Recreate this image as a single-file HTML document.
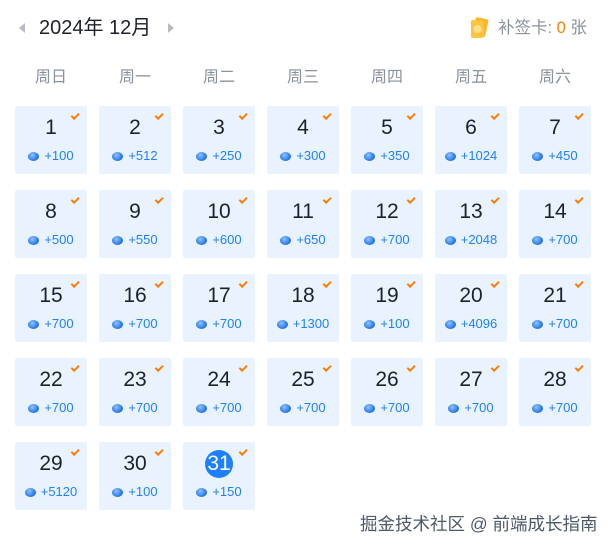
<!DOCTYPE html>
<html><head><meta charset="utf-8"><style>
body{margin:0;width:614px;height:551px;background:#fff;font-family:"Liberation Sans","Noto Sans CJK SC",sans-serif;position:relative;overflow:hidden}
.hd{position:absolute;top:15px;left:39px;font-size:20px;color:#1d2129;line-height:26px}
.arl{position:absolute;left:19px;top:23px;width:0;height:0;border-top:5px solid transparent;border-bottom:5px solid transparent;border-right:6px solid #b8bcc2}
.arr{position:absolute;left:168px;top:23px;width:0;height:0;border-top:5px solid transparent;border-bottom:5px solid transparent;border-left:6px solid #b8bcc2}
.card{position:absolute;left:498px;top:17px;font-size:16.5px;color:#8a919f;line-height:22px;white-space:nowrap}
.card b{font-weight:normal;color:#ff7d00}
.wk{position:absolute;top:68px;width:72px;text-align:center;font-size:16px;color:#8a919f;line-height:20px}
.c{position:absolute;width:72px;height:68px;background:#e8f3ff;border-radius:2px}
.c .n{position:absolute;top:9px;left:0;width:72px;text-align:center;font-size:21px;color:#1d2129;line-height:26px}
.c .p{position:absolute;top:41px;left:0;width:72px;text-align:center;font-size:13px;color:#1e80ff;line-height:17px}
.c .p i{display:inline-block;width:11px;height:9px;border-radius:50%;background:radial-gradient(circle at 40% 35%,#8cc4ff,#1e6fe6 70%);vertical-align:-1px;margin-right:5px}
.c .k{position:absolute;right:8px;top:7px;width:6px;height:2.5px;border-left:2px solid #ff7d00;border-bottom:2px solid #ff7d00;transform:rotate(-45deg)}
.c .t{display:inline-block;width:28px;height:28px;border-radius:50%;background:#1e80ff;color:#fff;margin-top:-1px;line-height:28px}
.wm{position:absolute;left:360px;top:513px;font-size:17.5px;color:#4e5969;line-height:22px;white-space:nowrap}
</style></head><body>
<div class="arl"></div><div class="hd">2024年 12月</div><div class="arr"></div>
<svg style="position:absolute;left:469px;top:17px" width="20" height="22" viewBox="0 0 20 22"><rect x="5" y="1" width="13" height="18" rx="2" fill="#ffb52a" transform="rotate(12 11 10)"/><rect x="2" y="3" width="13" height="18" rx="2" fill="#ffc43d"/><circle cx="8.5" cy="12" r="4" fill="#ffe08a"/></svg>
<div class="card">补签卡: <b>0</b> 张</div>
<div class="wk" style="left:15px">周日</div><div class="wk" style="left:99px">周一</div><div class="wk" style="left:183px">周二</div><div class="wk" style="left:267px">周三</div><div class="wk" style="left:351px">周四</div><div class="wk" style="left:435px">周五</div><div class="wk" style="left:519px">周六</div>

<div class="c" style="left:15px;top:106px"><div class="n">1</div><div class="p"><i></i>+100</div><div class="k"></div></div>
<div class="c" style="left:99px;top:106px"><div class="n">2</div><div class="p"><i></i>+512</div><div class="k"></div></div>
<div class="c" style="left:183px;top:106px"><div class="n">3</div><div class="p"><i></i>+250</div><div class="k"></div></div>
<div class="c" style="left:267px;top:106px"><div class="n">4</div><div class="p"><i></i>+300</div><div class="k"></div></div>
<div class="c" style="left:351px;top:106px"><div class="n">5</div><div class="p"><i></i>+350</div><div class="k"></div></div>
<div class="c" style="left:435px;top:106px"><div class="n">6</div><div class="p"><i></i>+1024</div><div class="k"></div></div>
<div class="c" style="left:519px;top:106px"><div class="n">7</div><div class="p"><i></i>+450</div><div class="k"></div></div>

<div class="c" style="left:15px;top:190px"><div class="n">8</div><div class="p"><i></i>+500</div><div class="k"></div></div>
<div class="c" style="left:99px;top:190px"><div class="n">9</div><div class="p"><i></i>+550</div><div class="k"></div></div>
<div class="c" style="left:183px;top:190px"><div class="n">10</div><div class="p"><i></i>+600</div><div class="k"></div></div>
<div class="c" style="left:267px;top:190px"><div class="n">11</div><div class="p"><i></i>+650</div><div class="k"></div></div>
<div class="c" style="left:351px;top:190px"><div class="n">12</div><div class="p"><i></i>+700</div><div class="k"></div></div>
<div class="c" style="left:435px;top:190px"><div class="n">13</div><div class="p"><i></i>+2048</div><div class="k"></div></div>
<div class="c" style="left:519px;top:190px"><div class="n">14</div><div class="p"><i></i>+700</div><div class="k"></div></div>

<div class="c" style="left:15px;top:274px"><div class="n">15</div><div class="p"><i></i>+700</div><div class="k"></div></div>
<div class="c" style="left:99px;top:274px"><div class="n">16</div><div class="p"><i></i>+700</div><div class="k"></div></div>
<div class="c" style="left:183px;top:274px"><div class="n">17</div><div class="p"><i></i>+700</div><div class="k"></div></div>
<div class="c" style="left:267px;top:274px"><div class="n">18</div><div class="p"><i></i>+1300</div><div class="k"></div></div>
<div class="c" style="left:351px;top:274px"><div class="n">19</div><div class="p"><i></i>+100</div><div class="k"></div></div>
<div class="c" style="left:435px;top:274px"><div class="n">20</div><div class="p"><i></i>+4096</div><div class="k"></div></div>
<div class="c" style="left:519px;top:274px"><div class="n">21</div><div class="p"><i></i>+700</div><div class="k"></div></div>

<div class="c" style="left:15px;top:358px"><div class="n">22</div><div class="p"><i></i>+700</div><div class="k"></div></div>
<div class="c" style="left:99px;top:358px"><div class="n">23</div><div class="p"><i></i>+700</div><div class="k"></div></div>
<div class="c" style="left:183px;top:358px"><div class="n">24</div><div class="p"><i></i>+700</div><div class="k"></div></div>
<div class="c" style="left:267px;top:358px"><div class="n">25</div><div class="p"><i></i>+700</div><div class="k"></div></div>
<div class="c" style="left:351px;top:358px"><div class="n">26</div><div class="p"><i></i>+700</div><div class="k"></div></div>
<div class="c" style="left:435px;top:358px"><div class="n">27</div><div class="p"><i></i>+700</div><div class="k"></div></div>
<div class="c" style="left:519px;top:358px"><div class="n">28</div><div class="p"><i></i>+700</div><div class="k"></div></div>

<div class="c" style="left:15px;top:442px"><div class="n">29</div><div class="p"><i></i>+5120</div><div class="k"></div></div>
<div class="c" style="left:99px;top:442px"><div class="n">30</div><div class="p"><i></i>+100</div><div class="k"></div></div>
<div class="c" style="left:183px;top:442px"><div class="n"><span class="t">31</span></div><div class="p"><i></i>+150</div><div class="k"></div></div>

<div class="wm">掘金技术社区 @ 前端成长指南</div>
</body></html>
